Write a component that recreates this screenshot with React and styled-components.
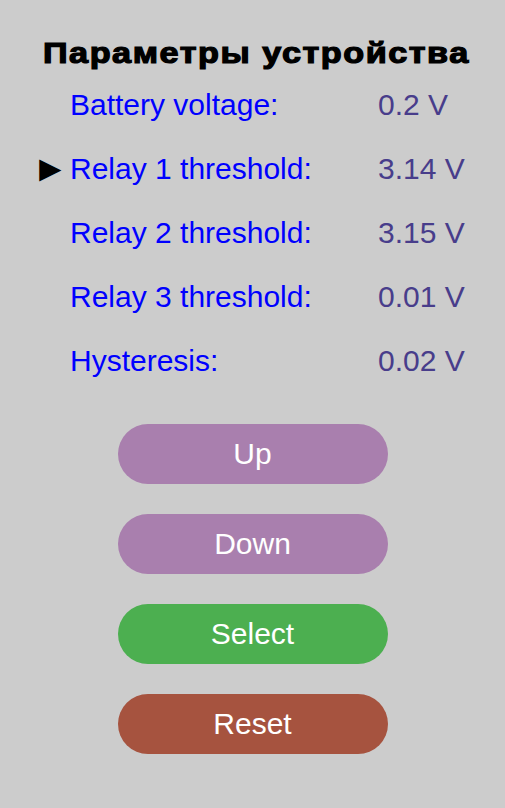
import styled, { createGlobalStyle } from "styled-components";

const GlobalStyle = createGlobalStyle`
  html, body {
    margin: 0;
    padding: 0;
    background-color: #cccccc;
  }
  body {
    font-family: "Liberation Sans", Arial, sans-serif;
  }
`;

const Page = styled.div`
  display: flex;
  flex-direction: column;
  align-items: center;
  width: 505px;
  min-height: 808px;
  padding-top: 33px;
  box-sizing: border-box;
`;

const Title = styled.h1`
  margin: 0;
  padding-left: 6px;
  font-family: "Liberation Sans", Arial, sans-serif;
  font-size: 29px;
  line-height: 40px;
  font-weight: 700;
  letter-spacing: 1.3px;
  -webkit-text-stroke: 1.2px #000;
  color: #000;
  text-align: center;
  white-space: nowrap;
  transform: scaleX(1.18);
`;

const Params = styled.div`
  display: grid;
  grid-template-columns: 31px 308px 90px;
  grid-auto-rows: 64px;
  width: 429px;
  margin-left: 2px;
  margin-top: 0;
  align-items: center;
`;

const Marker = styled.span`
  font-size: 37px;
  margin-left: -7px;
  color: #000;
  visibility: ${({ $active }) => ($active ? "visible" : "hidden")};
`;

const Label = styled.span`
  font-size: 30px;
  color: #0000ff;
  white-space: nowrap;
`;

const Value = styled.span`
  font-size: 30px;
  color: #483d8b;
  white-space: nowrap;
`;

const Buttons = styled.div`
  display: flex;
  flex-direction: column;
  gap: 30px;
  margin-top: 31px;
`;

const Button = styled.button`
  width: 270px;
  height: 60px;
  border: none;
  border-radius: 30px;
  background-color: ${({ $bg }) => $bg};
  color: #fff;
  font-family: "Liberation Sans", Arial, sans-serif;
  font-size: 30px;
  cursor: pointer;
  padding: 0;
`;

const params = [
  { label: "Battery voltage:", value: "0.2 V" },
  { label: "Relay 1 threshold:", value: "3.14 V", active: true },
  { label: "Relay 2 threshold:", value: "3.15 V" },
  { label: "Relay 3 threshold:", value: "0.01 V" },
  { label: "Hysteresis:", value: "0.02 V" },
];

const buttons = [
  { text: "Up", bg: "#a97fae" },
  { text: "Down", bg: "#a97fae" },
  { text: "Select", bg: "#4caf50" },
  { text: "Reset", bg: "#a6533f" },
];

export default function App() {
  return (
    <>
      <GlobalStyle />
      <Page>
        <Title>Параметры устройства</Title>
        <Params>
          {params.map((p) => [
            <Marker key={p.label + "m"} $active={p.active}>►</Marker>,
            <Label key={p.label}>{p.label}</Label>,
            <Value key={p.label + "v"}>{p.value}</Value>,
          ])}
        </Params>
        <Buttons>
          {buttons.map((b) => (
            <Button key={b.text} $bg={b.bg}>{b.text}</Button>
          ))}
        </Buttons>
      </Page>
    </>
  );
}
